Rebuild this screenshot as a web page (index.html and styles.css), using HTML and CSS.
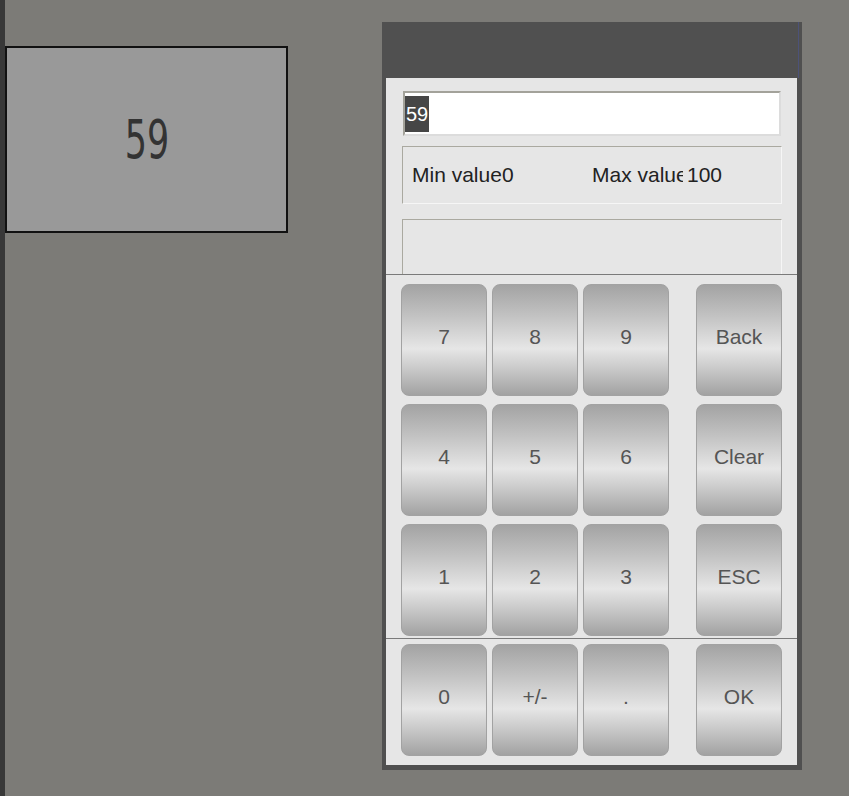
FILE: index.html
```html
<!DOCTYPE html>
<html lang="en">

<head>
    <meta charset="UTF-8">
    <meta name="viewport" content="width=device-width, initial-scale=1.0">
    <title>keypad</title>
    <link rel="stylesheet" href="styles.css">
</head>

<body>
    <div class="strip"></div>

    <div class="display">
        <span class="display-value">59</span>
    </div>

    <div class="dialog">
        <header class="dialog-head"></header>

        <div class="dialog-body">
            <div class="entry"><span class="entry-sel">59</span></div>

            <div class="limits">
                <div class="limit"><span class="limit-label">Min value</span><span>0</span></div>
                <div class="limit"><span class="limit-label">Max value</span><span>100</span></div>
            </div>

            <div class="note"></div>

            <hr class="rule">

            <div class="keys">
                <button class="key">7</button>
                <button class="key">8</button>
                <button class="key">9</button>
                <span></span>
                <button class="key">Back</button>

                <button class="key">4</button>
                <button class="key">5</button>
                <button class="key">6</button>
                <span></span>
                <button class="key">Clear</button>

                <button class="key">1</button>
                <button class="key">2</button>
                <button class="key">3</button>
                <span></span>
                <button class="key">ESC</button>
            </div>

            <hr class="rule rule-low">

            <div class="keys keys-last">
                <button class="key">0</button>
                <button class="key">+/-</button>
                <button class="key">.</button>
                <span></span>
                <button class="key">OK</button>
            </div>
        </div>
    </div>
</body>

</html>
```

FILE: styles.css
```css
*,
*::before,
*::after {
    box-sizing: border-box;
}

html,
body {
    margin: 0;
    height: 100%;
}

body {
    display: flex;
    align-items: flex-start;
    background: #7c7b77;
    font-family: 'Liberation Sans', Arial, sans-serif;
    overflow: hidden;
}

.strip {
    width: 5px;
    height: 100%;
    background: #383838;
    flex: none;
}

.display {
    margin-top: 46px;
    width: 283px;
    height: 187px;
    border: 2px solid #111;
    background: #999;
    display: flex;
    justify-content: center;
    align-items: center;
    flex: none;
}

.display-value {
    font-family: 'DejaVu Sans', sans-serif;
    font-stretch: condensed;
    font-size: 54px;
    color: #333;
    transform: scaleX(.72);
}

.dialog {
    margin: 22px 0 0 94px;
    width: 420px;
    background: #505050;
    padding: 0 4px 5px 4px;
    flex: none;
}

.dialog-head {
    height: 56px;
    margin-right: -1px;
    border-right: 1px solid #4c5278;
}

.dialog-body {
    background: #e6e6e6;
    width: 411px;
    padding: 13px 0 9px 0;
}

.entry {
    margin: 0 16px 0 17px;
    height: 45px;
    background: #fff;
    border: 2px solid #dcdcdc;
    border-top-color: #a3a29a;
    border-left-color: #a3a29a;
    display: flex;
    align-items: center;
}

.entry-sel {
    background: #464646;
    color: #fff;
    font-size: 20px;
    line-height: 36px;
    padding: 0 1px;
}

.limits {
    margin: 10px 15px 0 16px;
    height: 58px;
    border: 1px solid #f6f6f6;
    border-top-color: #aaa9a0;
    border-left-color: #aaa9a0;
    display: flex;
    align-items: center;
    padding-left: 9px;
    font-size: 21px;
    color: #222;
}

.limit {
    width: 180px;
    display: flex;
    white-space: nowrap;
}

/* the max label is cut by its fixed width, as in the panel */
.limit-label {
    max-width: 91px;
    overflow: hidden;
}

.limit + .limit .limit-label {
    margin-right: 4px;
}

.note {
    margin: 15px 15px 0 16px;
    height: 55px;
    border: 1px solid #f6f6f6;
    border-top-color: #aaa9a0;
    border-left-color: #aaa9a0;
    border-bottom: 0;
}

.rule {
    margin: 0;
    border: 0;
    height: 1px;
    background: #7a7a7a;
}

.keys {
    display: grid;
    grid-template-columns: repeat(3, 86px) 17px 86px;
    grid-auto-rows: 112px;
    column-gap: 5px;
    row-gap: 8px;
    padding: 9px 0 0 15px;
}

.keys-last {
    padding-top: 5px;
}

.rule-low {
    margin-top: 2px;
}

.key {
    margin: 0;
    padding: 0;
    border: 1px solid #a2a2a2;
    border-radius: 8px;
    background: linear-gradient(to bottom, #a3a3a3 0%, #c2c2c2 28%, #e6e6e6 58%, #c6c6c6 78%, #a2a2a2 100%);
    font-family: 'Liberation Sans', Arial, sans-serif;
    font-size: 21px;
    color: #555;
    padding-bottom: 6px;
}
```
